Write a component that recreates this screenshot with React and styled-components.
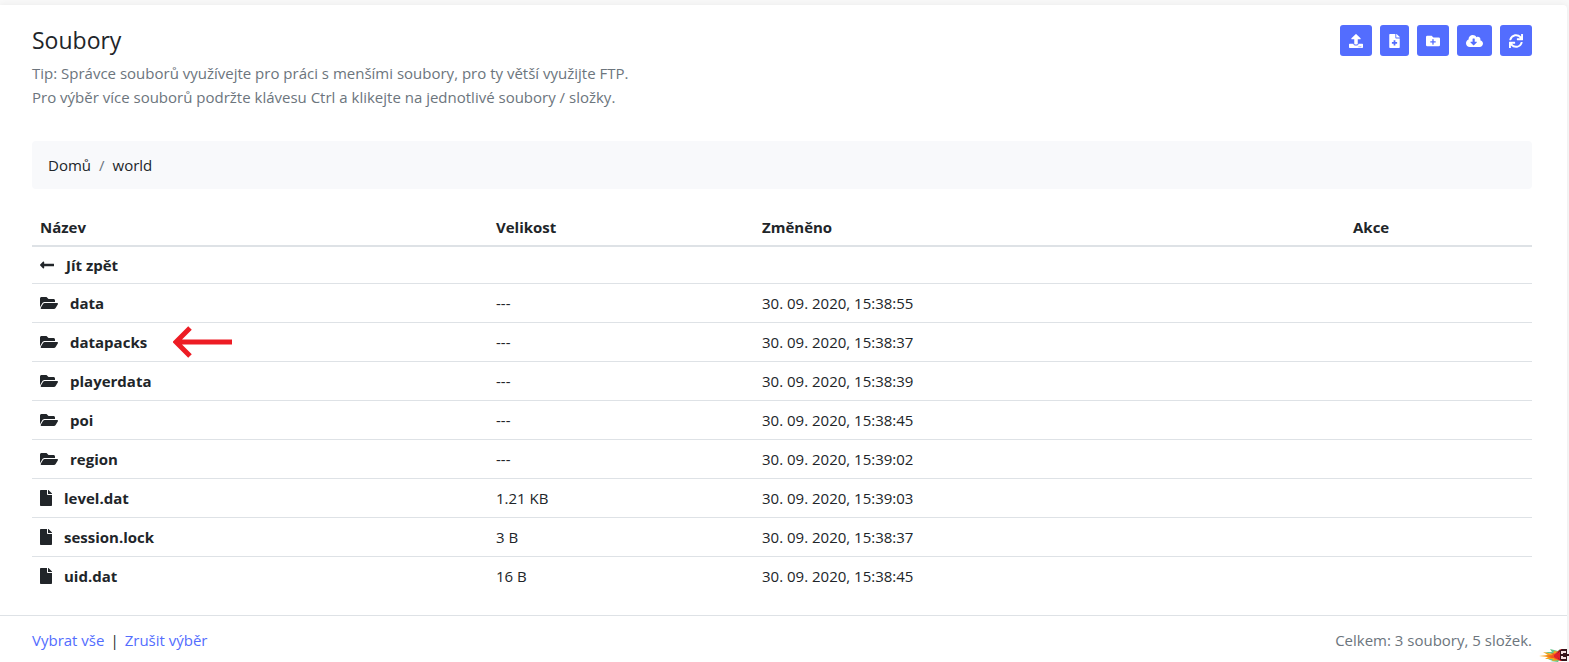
import React from 'react';
import styled, { createGlobalStyle } from 'styled-components';
import {
  FaCloudDownloadAlt,
  FaFile,
  FaFileMedical,
  FaFolderOpen,
  FaFolderPlus,
  FaLongArrowAltLeft,
  FaSync,
  FaUpload,
} from 'react-icons/fa';

const Colors = {
  Page: '#f8f8f8',
  White: '#ffffff',
  Text: '#212529',
  Muted: '#6c757d',
  Primary: '#536dfe',
  Border: '#dee2e6',
  Crumbs: '#f8f9fb',
  Red: '#ed1c24',
};

const actions = [
  { label: 'Nahrát soubor', icon: FaUpload, width: '14px' },
  { label: 'Nový soubor', icon: FaFileMedical, width: '11px' },
  { label: 'Nová složka', icon: FaFolderPlus, width: '14px' },
  { label: 'Stáhnout z URL', icon: FaCloudDownloadAlt, width: '17px' },
  { label: 'Obnovit', icon: FaSync, width: '14px' },
];

const files = [
  { name: 'data', folder: true, size: '---', changed: '30. 09. 2020, 15:38:55' },
  { name: 'datapacks', folder: true, size: '---', changed: '30. 09. 2020, 15:38:37', marked: true },
  { name: 'playerdata', folder: true, size: '---', changed: '30. 09. 2020, 15:38:39' },
  { name: 'poi', folder: true, size: '---', changed: '30. 09. 2020, 15:38:45' },
  { name: 'region', folder: true, size: '---', changed: '30. 09. 2020, 15:39:02' },
  { name: 'level.dat', size: '1.21 KB', changed: '30. 09. 2020, 15:39:03' },
  { name: 'session.lock', size: '3 B', changed: '30. 09. 2020, 15:38:37' },
  { name: 'uid.dat', size: '16 B', changed: '30. 09. 2020, 15:38:45' },
];

const App = () => (
  <Page>
    <GlobalStyle />
    <Card>
      <Body>
        <Header>
          <div>
            <Title>Soubory</Title>
            <Tip>
              Tip: Správce souborů využívejte pro práci s menšími soubory, pro ty větší využijte FTP.
              <br />
              Pro výběr více souborů podržte klávesu Ctrl a klikejte na jednotlivé soubory / složky.
            </Tip>
          </div>
          <Toolbar>
            {actions.map(({ label, icon: Icon, width }) => (
              <ToolButton key={label} type="button" aria-label={label} $icon={width}>
                <Icon />
              </ToolButton>
            ))}
          </Toolbar>
        </Header>
        <Breadcrumb>
          <CrumbLink href="#">Domů</CrumbLink>
          <Slash>/</Slash>
          <CrumbLink href="#world">world</CrumbLink>
        </Breadcrumb>
        <Table>
          <colgroup>
            <Col $width="456px" />
            <Col $width="266px" />
            <Col />
            <Col $width="187px" />
          </colgroup>
          <thead>
            <tr>
              <Th>Název</Th>
              <Th>Velikost</Th>
              <Th>Změněno</Th>
              <Th>Akce</Th>
            </tr>
          </thead>
          <tbody>
            <BackRow>
              <Td colSpan={4}>
                <Name href="#back" $icon="14px">
                  <FaLongArrowAltLeft />
                  Jít zpět
                </Name>
              </Td>
            </BackRow>
            {files.map((file) => (
              <tr key={file.name}>
                <Td>
                  <Name href={`#${file.name}`} $icon={file.folder ? '18px' : '12px'}>
                    {file.folder ? <FaFolderOpen /> : <FaFile />}
                    {file.name}
                    {file.marked && <RedArrow />}
                  </Name>
                </Td>
                <Td>{file.size}</Td>
                <Td>{file.changed}</Td>
                <Td />
              </tr>
            ))}
          </tbody>
        </Table>
      </Body>
      <Footer>
        <div>
          <TextButton type="button">Vybrat vše</TextButton>
          <Divider>|</Divider>
          <TextButton type="button">Zrušit výběr</TextButton>
        </div>
        <span>Celkem: 3 soubory, 5 složek.</span>
      </Footer>
    </Card>
    <Rocket />
  </Page>
);

const RedArrow = () => (
  <Pointer viewBox="0 0 60 32" aria-hidden="true">
    <path d="M59 16H4M17 2L3 16l14 14" fill="none" stroke={Colors.Red} strokeWidth="5" />
  </Pointer>
);

const Rocket = () => (
  <Flame viewBox="0 0 30 14" aria-hidden="true">
    <path d="M5 4l8 0-2-3 8 2 2-2v10l-2 3-8-1 3-1-5 0 4-2-6-3 6-1z" fill="#63c58b" />
    <path d="M0 8l9-1-5-3 10 2 1-3 6 1v8l-8 1 1-2-8 0 3-2z" fill="#f6a21c" />
    <path d="M6 8l8-1-2-2 6 1 3-2v8l-6-1 1-1-7 0 4-1z" fill="#f2581f" />
    <path d="M15 7l4-4 3-2 5 0v12h-6l-6-4z" fill="#e3222c" />
    <path d="M20 3l3-2h5v12h-5l-3-2-2-4z" fill="#35141a" />
    <path d="M17 7l4-4v9z" fill="#e3222c" />
    <path d="M22 3h5v2h-3v4h3v2h-5z" fill="#f4dfe0" />
    <path d="M22 6h8v2h-8z" fill="#35141a" />
  </Flame>
);

const GlobalStyle = createGlobalStyle`
  * {
    box-sizing: border-box;
  }

  body {
    margin: 0;
    background-color: ${Colors.Page};
    color: ${Colors.Text};
    font-family: 'Open Sans', 'Noto Sans', sans-serif;
    font-size: 15px;
    line-height: 24px;
  }
`;

const Page = styled.div`
  display: flex;
  min-height: 100vh;
  padding: 5px 2px 0 0;
  overflow: hidden;
  position: relative;
`;

const Card = styled.main`
  flex: 1;
  min-width: 0;
  background-color: ${Colors.White};
  border-top-right-radius: 4px;
  box-shadow: 0 0 6px rgba(0, 0, 0, .06);
`;

const Body = styled.div`
  padding: 20px 35px 20px 32px;
`;

const Header = styled.header`
  display: flex;
  justify-content: space-between;
  align-items: flex-start;
  margin-bottom: 32px;
`;

const Title = styled.h1`
  margin: 0 0 6px;
  font-size: 23px;
  font-weight: 400;
  line-height: 30px;
`;

const Tip = styled.p`
  margin: 0;
  color: ${Colors.Muted};
`;

const Toolbar = styled.div`
  display: flex;
  gap: 8px;
`;

const ToolButton = styled.button`
  display: flex;
  align-items: center;
  height: 31px;
  padding: 0 9px;
  border: 0;
  border-radius: 3px;
  background-color: ${Colors.Primary};
  color: ${Colors.White};
  cursor: pointer;

  svg {
    width: ${({ $icon }) => $icon};
    height: 14px;
  }
`;

const Breadcrumb = styled.nav`
  display: flex;
  gap: 8px;
  margin-bottom: 20px;
  padding: 12px 16px;
  border-radius: 4px;
  background-color: ${Colors.Crumbs};
`;

const CrumbLink = styled.a`
  color: inherit;
  text-decoration: none;
`;

const Slash = styled.span`
  color: ${Colors.Muted};
`;

const Table = styled.table`
  width: 100%;
  table-layout: fixed;
  border-collapse: separate;
  border-spacing: 0;
`;

const Col = styled.col`
  width: ${({ $width }) => $width || 'auto'};
`;

const Th = styled.th`
  padding: 6px 8px;
  border-bottom: 2px solid ${Colors.Border};
  font-weight: 700;
  text-align: left;
`;

const Td = styled.td`
  height: 39px;
  padding: 7px 8px;
  border-top: 1px solid ${Colors.Border};
`;

const BackRow = styled.tr`
  ${Td} {
    height: 36px;
    padding: 6px 8px;
    border-top: 0;
  }
`;

const Name = styled.a`
  display: inline-flex;
  align-items: center;
  gap: 12px;
  position: relative;
  color: inherit;
  font-weight: 700;
  text-decoration: none;
  vertical-align: top;

  svg {
    width: ${({ $icon }) => $icon};
    height: 16px;
  }
`;

const Pointer = styled.svg`
  && {
    position: absolute;
    left: calc(100% + 26px);
    top: -4px;
    width: 60px;
    height: 32px;
  }
`;

const Footer = styled.footer`
  display: flex;
  justify-content: space-between;
  padding: 12px 35px 10px 32px;
  border-top: 1px solid ${Colors.Border};
  color: ${Colors.Muted};
`;

const TextButton = styled.button`
  padding: 0;
  border: 0;
  background: none;
  color: ${Colors.Primary};
  font: inherit;
  cursor: pointer;
`;

const Divider = styled.span`
  margin: 0 6px;
  color: ${Colors.Text};
`;

const Flame = styled.svg`
  position: absolute;
  right: 0;
  bottom: 0;
  width: 30px;
  height: 14px;
`;

export default App;
